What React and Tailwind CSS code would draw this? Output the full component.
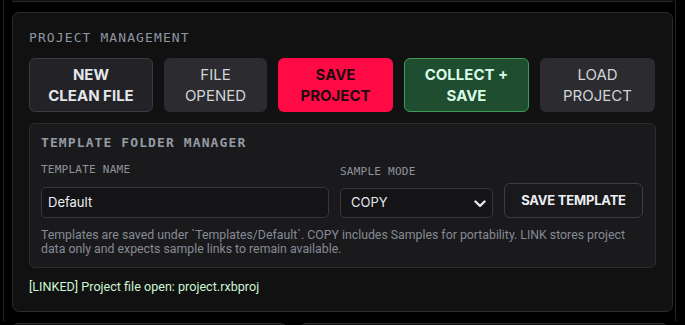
export default function App() {
  const mono = { fontFamily: '"DejaVu Sans Mono", "Liberation Mono", monospace' };
  const sans = { fontFamily: 'Inter, "Noto Sans", Arial, sans-serif' };
  const roboto = { fontFamily: 'Roboto, "Liberation Sans", Arial, sans-serif' };
  return (
    <div className="h-[325px] w-[685px] overflow-hidden bg-black" style={sans}>
      <div className="ml-[3px] flex h-[321px] w-[673px] flex-col border-x border-[#262626] pl-[8px] pr-[2px]">
        <div className="h-[2px] rounded-b-[6px] border-b border-[#2a2a2a] bg-[#111111]" />
        <div className="mt-[10px] rounded-[7px] border border-[#2b2b2b] bg-[#111111] px-[16px] pb-[17px] pt-[17px]">
          <div className="text-[13px] leading-[16px] tracking-[1.1px] text-[#8d97a3]" style={mono}>
            PROJECT MANAGEMENT
          </div>
          <div className="mt-[12px] flex gap-[11px]">
            <button className="flex h-[54px] w-[124px] items-center justify-center rounded-[6px] border border-[#3a3a41] bg-[#222227] text-[15px] font-bold leading-[21px] text-[#e4e6ea]">
              NEW<br />CLEAN FILE
            </button>
            <button className="flex h-[54px] w-[103px] items-center justify-center rounded-[6px] bg-[#2b2b30] text-[15px] leading-[21px] text-[#d2d4d8]">
              FILE<br />OPENED
            </button>
            <button className="flex h-[54px] w-[115px] items-center justify-center rounded-[6px] bg-[#ff0a45] text-[15px] font-bold leading-[21px] text-[#1c0a10]">
              SAVE<br />PROJECT
            </button>
            <button className="flex h-[54px] w-[125px] items-center justify-center rounded-[6px] border border-[#3f9a5a] bg-[#1e4d2f] text-[15px] font-bold leading-[21px] text-[#d9fbe6]">
              COLLECT +<br />SAVE
            </button>
            <button className="flex h-[54px] w-[115px] items-center justify-center rounded-[6px] bg-[#2b2b30] text-[15px] leading-[21px] text-[#d2d4d8]">
              LOAD<br />PROJECT
            </button>
          </div>
          <div className="mt-[11px] rounded-[6px] border border-[#2c2c31] bg-[#1a1a1d] px-[11px] pb-[11px] pt-[11px]">
            <div className="text-[13px] font-bold leading-[16px] tracking-[1.1px] text-[#959ba3]" style={mono}>
              TEMPLATE FOLDER MANAGER
            </div>
            <div className="mt-[12px] grid grid-cols-[288px_153px_139px] items-end gap-[11px]">
              <div className="flex flex-col">
                <div className="mb-[10px] text-[11px] leading-[14px] tracking-[0.25px] text-[#8e939a]" style={mono}>
                  TEMPLATE NAME
                </div>
                <div className="flex h-[31px] items-center rounded-[5px] border border-[#36363c] bg-[#141417] pl-[6px] text-[13px] text-[#eceef2]">
                  Default
                </div>
              </div>
              <div className="flex flex-col">
                <div className="mb-[9px] text-[11px] leading-[14px] tracking-[0.25px] text-[#8e939a]" style={mono}>
                  SAMPLE MODE
                </div>
                <div className="flex h-[30px] items-center justify-between rounded-[5px] border border-[#36363c] bg-[#141417] pl-[10px] pr-[6px] text-[13px] text-[#e4e6ea]">
                  <span>COPY</span>
                  <svg width="12" height="8" viewBox="0 0 12 8" className="mt-[1px]">
                    <path d="M1.5 1.5 L6 6 L10.5 1.5" fill="none" stroke="#e4e6ea" strokeWidth="2.4" strokeLinecap="round" strokeLinejoin="round" />
                  </svg>
                </div>
              </div>
              <button className="flex h-[35px] items-center justify-center rounded-[6px] border border-[#3c3c42] bg-[#19191c] text-[13px] font-bold tracking-[-0.2px] text-[#eceef2]">
                SAVE TEMPLATE
              </button>
            </div>
            <div className="mt-[10px] whitespace-nowrap text-[12.3px] leading-[14px] text-[#868b94]" style={roboto}>
              Templates are saved under `Templates/Default`. COPY includes Samples for portability. LINK stores project
              <br />data only and expects sample links to remain available.
            </div>
          </div>
          <div className="mt-[12px] text-[12.6px] leading-[14px] text-[#ccf5d4]" style={roboto}>
            [LINKED] Project file open: project.rxbproj
          </div>
        </div>
      </div>
      <div className="ml-[12px] mt-[2px] flex gap-[13px]">
        <div className="h-[20px] w-[275px] rounded-t-[6px] border border-[#2a2a2a] bg-[#111111]" />
        <div className="h-[20px] w-[368px] rounded-t-[6px] border border-[#2a2a2a] bg-[#111111]" />
      </div>
    </div>
  );
}
